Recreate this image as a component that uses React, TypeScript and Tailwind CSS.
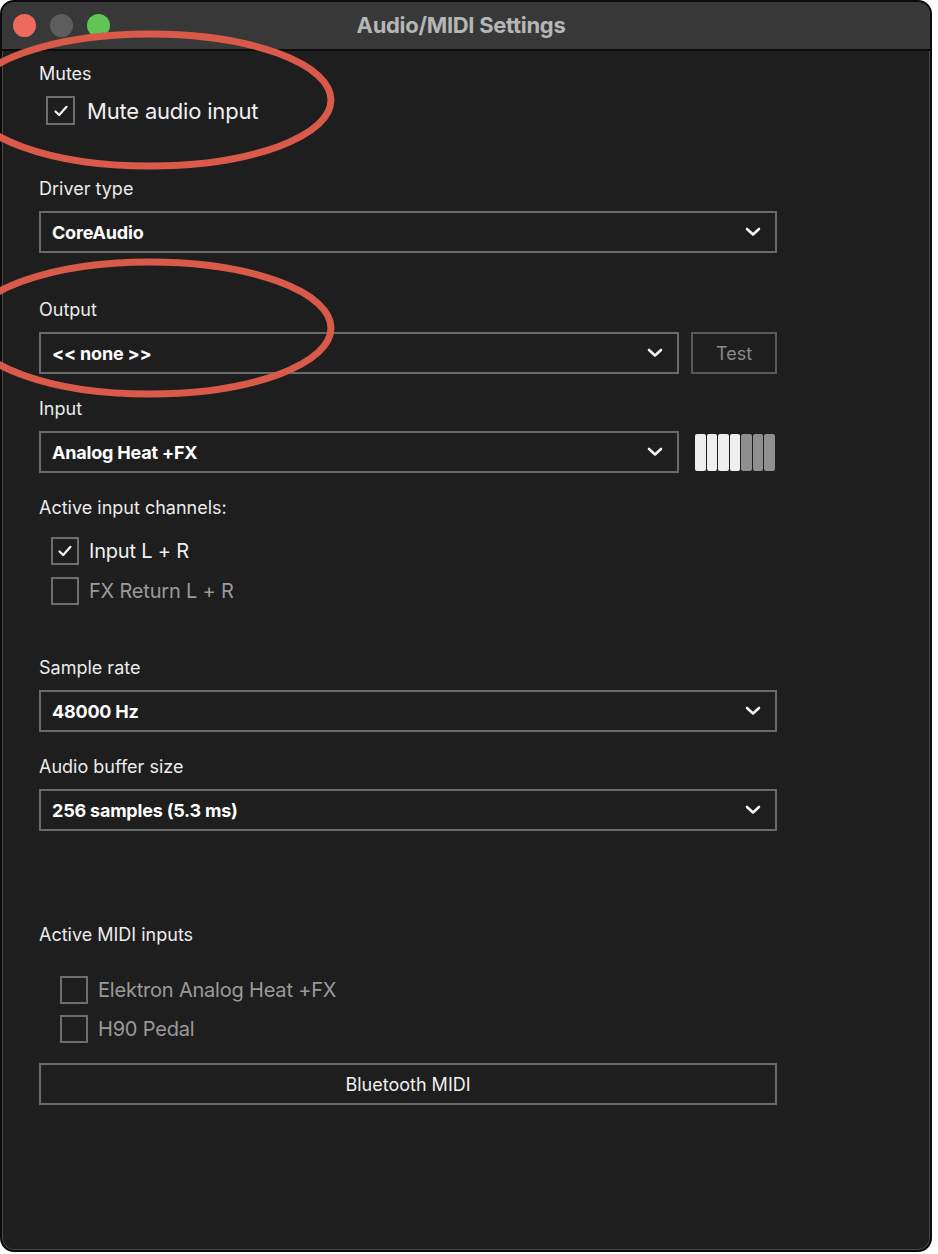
import React from "react";

const font = { fontFamily: "Inter, 'Liberation Sans', sans-serif" };

function Chevron() {
  return (
    <svg width="16" height="10" viewBox="0 0 16 10" className="shrink-0">
      <path d="M2 2 L8 7.5 L14 2" fill="none" stroke="#f2f2f2" strokeWidth="2.6" strokeLinecap="round" strokeLinejoin="round" />
    </svg>
  );
}

function Check() {
  return (
    <svg width="16" height="14" viewBox="0 0 16 14">
      <path d="M2.5 7.5 L6.2 11 L13.5 2.8" fill="none" stroke="#f4f4f4" strokeWidth="2.2" strokeLinecap="round" strokeLinejoin="round" />
    </svg>
  );
}

function Label({ children, className = "" }: { children: React.ReactNode; className?: string }) {
  return <div className={`h-[22px] text-[18px] leading-[22px] text-[#ececec] ${className}`}>{children}</div>;
}

function Select({ value, className = "" }: { value: string; className?: string }) {
  return (
    <div className={`flex h-[42px] items-center justify-between border-2 border-[#6a6a6a] pl-[11px] pr-[14px] ${className}`}>
      <span className="text-[18px] font-bold tracking-[-0.2px] text-white">{value}</span>
      <Chevron />
    </div>
  );
}

function CheckRow({
  label,
  checked,
  dim,
  size = 28,
  text = "text-[20px]",
  className = "",
}: {
  label: string;
  checked?: boolean;
  dim?: boolean;
  size?: number;
  text?: string;
  className?: string;
}) {
  return (
    <div className={`flex items-center gap-[10px] ${className}`}>
      <div
        className="flex shrink-0 items-center justify-center border-2 border-[#6e6e6e]"
        style={{ width: size, height: size }}
      >
        {checked && <Check />}
      </div>
      <span className={`${text} leading-none tracking-[-0.2px] ${dim ? "text-[#9a9a9a]" : "text-[#f0f0f0]"}`}>{label}</span>
    </div>
  );
}

export default function App() {
  const meter = [true, true, true, true, false, false, false];
  return (
    <div className="relative h-[1254px] w-[938px] overflow-hidden bg-white" style={font}>
      <div className="relative h-[1252px] w-[932px] overflow-hidden rounded-[14px] border-2 border-[#0b0b0b] bg-[#1e1e1e] shadow-[inset_0_0_0_1px_#4a4a4a]">
        {/* title bar */}
        <div className="relative flex h-[49px] items-center border-b-2 border-[#0c0c0c] bg-[#383838]">
          <div className="ml-[11px] flex gap-[14px]">
            <div className="h-[23px] w-[23px] rounded-full bg-[#ec6a5e]" />
            <div className="h-[23px] w-[23px] rounded-full bg-[#5d5d5d]" />
            <div className="h-[23px] w-[23px] rounded-full bg-[#5fc553]" />
          </div>
          <div className="absolute left-0 right-0 top-0 flex h-full items-center justify-center pr-[10px]">
            <span className="text-[22px] font-bold tracking-[-0.3px] text-[#b6b6b6]">Audio/MIDI Settings</span>
          </div>
        </div>

        {/* content */}
        <div className="flex flex-col pl-[37px] pt-[12px]">
          <Label>Mutes</Label>
          <CheckRow label="Mute audio input" checked size={29} text="text-[22px]" className="ml-[7px] mt-[11px] gap-[12px]" />

          <Label className="mt-[53px]">Driver type</Label>
          <Select value="CoreAudio" className="mt-[11px] w-[738px]" />

          <Label className="mt-[46px]">Output</Label>
          <div className="mt-[11px] flex gap-[12px]">
            <Select value="<< none >>" className="w-[640px]" />
            <div className="flex h-[42px] w-[86px] items-center justify-center border-2 border-[#5a5a5a] text-[18px] text-[#8a8a8a]">
              Test
            </div>
          </div>

          <Label className="mt-[24px]">Input</Label>
          <div className="mt-[11px] flex items-center gap-[16px]">
            <Select value="Analog Heat +FX" className="w-[640px]" />
            <div className="flex h-[37px] gap-[1px]">
              {meter.map((on, i) => (
                <div key={i} className={`w-[10.5px] rounded-[2px] ${on ? "bg-[#efefef]" : "bg-[#8f8f8f]"}`} />
              ))}
            </div>
          </div>

          <Label className="mt-[24px]">Active input channels:</Label>
          <CheckRow label="Input L + R" checked className="ml-[12px] mt-[18px]" />
          <CheckRow label="FX Return L + R" dim className="ml-[12px] mt-[12px]" />

          <Label className="mt-[52px]">Sample rate</Label>
          <Select value="48000 Hz" className="mt-[11px] w-[738px]" />

          <Label className="mt-[24px]">Audio buffer size</Label>
          <Select value="256 samples (5.3 ms)" className="mt-[11px] w-[738px]" />

          <Label className="mt-[93px]">Active MIDI inputs</Label>
          <CheckRow label="Elektron Analog Heat +FX" dim className="ml-[21px] mt-[30px]" />
          <CheckRow label="H90 Pedal" dim className="ml-[21px] mt-[11px]" />

          <div className="mt-[20px] flex h-[42px] w-[738px] items-center justify-center border-2 border-[#6a6a6a] text-[18px] text-[#f0f0f0]">
            Bluetooth MIDI
          </div>
        </div>
      </div>

      {/* annotation ellipses */}
      <svg className="pointer-events-none absolute left-0 top-0" width="938" height="1254">
        <ellipse cx="150" cy="100" rx="181" ry="66" fill="none" stroke="#d95a4a" strokeWidth="7" />
        <ellipse cx="150" cy="328" rx="181" ry="66" fill="none" stroke="#d95a4a" strokeWidth="7" />
      </svg>
    </div>
  );
}
